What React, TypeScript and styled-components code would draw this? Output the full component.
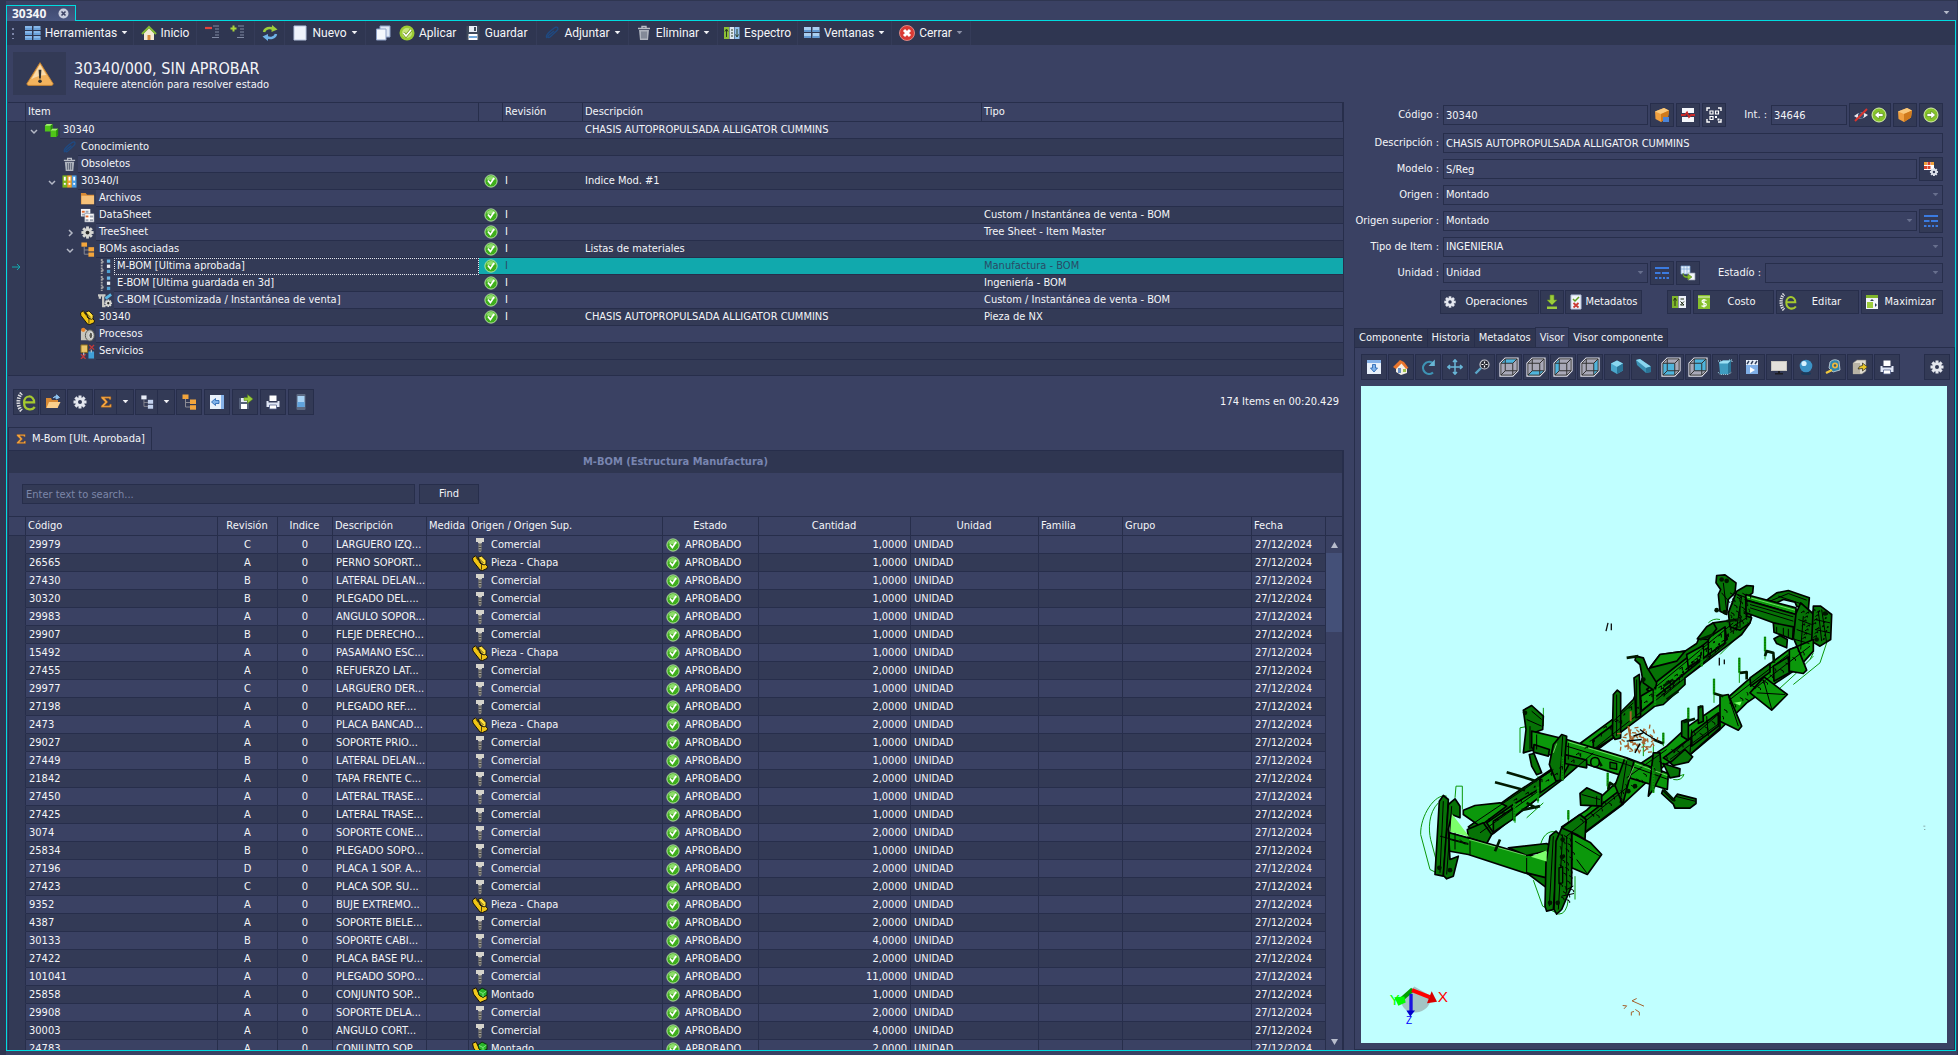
import React, { ReactNode } from "react";
import styled, { createGlobalStyle, css } from "styled-components";

const c = {
  base: "#3a4163",
  alt: "#333a56",
  dark: "#2f3651",
  line: "#272e4b",
  cyan: "#00dce0",
  teal: "#11a9ad",
  text: "#f4f5f8",
};

const ui = `"DejaVu Sans Condensed", "Noto Sans", sans-serif`;
const bar = `Roboto, "Noto Sans", sans-serif`;

const Global = createGlobalStyle`
  *, *::before, *::after { box-sizing: border-box; }
  body { margin: 0; background: ${c.base}; color: ${c.text}; font: 11px/14px ${ui}; }
  button, input, select { font: inherit; color: inherit; margin: 0; }
  svg { display: block; flex: none; }
`;

/* ---------- icons ---------- */

const gear = (fill: string, hole: string) => (
  <>
    {[0, 45, 90, 135].map((a) => (
      <rect key={a} x="6.5" y="1.5" width="3" height="13" fill={fill} transform={`rotate(${a} 8 8)`} />
    ))}
    <circle cx="8" cy="8" r="4.6" fill={fill} />
    <circle cx="8" cy="8" r="2" fill={hole} />
  </>
);

const cube = (face: string) => (
  <>
    <path d="M1 5L5 1H15V11L11 15H1Z" fill="#a9a9b8" stroke="#e4e4ee" strokeWidth="1.4" />
    <path d={face} fill="#4fb4dc" />
    <path d="M1.5 5L5 1.5H14.5V11L11 14.5H1.5ZM1.5 5H11V14.5M11 5L14.5 1.5M5 1.5V11H14.5M5 11L1.5 14.5" fill="none" stroke="#333" strokeWidth=".8" />
  </>
);

const sigma = <path d="M2.5 2H13.5V5H12L11.5 3.8H6.5L10 8L6 12.3H11.8L12.5 10.6H14V14H2.5V12.5L7 8L2.5 3.5Z" fill="#f5a742" stroke="#a85f14" strokeWidth=".5" />;

const paper = <path d="M2 1H14V15H2Z" fill="#eef3fb" stroke="#b7c3dd" />;

const tree = (a: string, b: string) => (
  <>
    <path d="M4.5 5V13H10M4.5 8.5H10" fill="none" stroke="#8c8c94" />
    <rect x="1.5" y="0.5" width="6" height="4.5" fill={a} />
    <rect x="9" y="5.5" width="6" height="4.5" fill={b} />
    <rect x="9" y="11.2" width="6" height="4.5" fill={b} />
  </>
);

const bracket = (
  <>
    <path d="M4.500 1C1 4 1 12 4.500 15" fill="none" stroke="#d9d9dd" strokeWidth="3" strokeDasharray="1.200 .8" />
    <path d="M6.800 8.300H14.500C14.500 2 6.500 2 6.500 8.500C6.500 15 13 14.800 15 12" fill="none" stroke="#a5c92f" strokeWidth="1.800" />
  </>
);

const printer = (
  <>
    <path d="M4.500 1.500H11.500V7H4.500Z" fill="#fff" />
    <path d="M1.500 7H3.500V8.500H12.500V7H14.500V13H1.500Z" fill="#dfe6f5" />
    <path d="M4.500 11H11.500V15H4.500Z" fill="#fff" stroke="#56628c" strokeWidth=".8" />
  </>
);

const trash = (
  <>
    <path d="M2 3.500H14M6 3V1.500H10V3" stroke="#b9bdc6" strokeWidth="1.400" fill="none" />
    <path d="M3 5H13L12 15H4Z" fill="#aeb3bd" />
    <path d="M6 6.500V13.500M8 6.500V13.500M10 6.500V13.500" stroke="#596073" />
  </>
);

const box = (
  <>
    <path d="M1 4.500L10 1L15 3.500L14 10.500L7 15L1.500 12Z" fill="#f0a040" />
    <path d="M1 4.500L7 7L15 3.500L10 1Z" fill="#f9c97c" />
    <path d="M7 7L15 3.500L14 10.500L7 15Z" fill="#cf7a1c" />
  </>
);

const arrowDisc = (d: string) => (
  <>
    <circle cx="8" cy="8" r="7" fill="#86c32a" stroke="#d7efac" />
    <path d={d} fill="#fff" stroke="#4d8011" strokeWidth=".6" />
  </>
);

const part = (
  <>
    <path d="M.5 3L3.500 .8L8 6L8 8L10.500 9.500L13 8.500L15.500 11.500L15 13.500L10.500 15.500L8 15L1 6Z" fill="#f0c414" stroke="#15120a" />
    <path d="M6 2.500L9.500 1L14 5.500L14 9L12 10L9 8Z" fill="#ffdf3c" stroke="#15120a" strokeWidth=".9" />
    <path d="M4 2.500L9.500 9.500V14.500M6.500 3L11.500 8" fill="none" stroke="#15120a" strokeWidth=".7" />
  </>
);

const list = <path d="M1 3H15M1 8H6.500M8 8H15M1 13H3.500M5 13H7.500M9 13H11M12.500 13H15" stroke="#3b7be0" strokeWidth="1.800" />;

const binders = (
  <>
    {["#7cb51c", "#f2a32a", "#4a9be0"].map((f, i) => (
      <g key={f}>
        <rect x={i * 5 + 0.5} y="1.500" width="5" height="13" fill={f} />
        <rect x={i * 5 + 2} y="3" width="2" height="4" fill="#fff" />
        <rect x={i * 5 + 2} y="9.500" width="2" height="2" fill="#fff" />
      </g>
    ))}
  </>
);

const bars = (
  <>
    <path d="M4 0V16M4 3H7M4 12H7" stroke="#a4a4a8" strokeWidth="2" fill="none" strokeDasharray="2 1" />
    <rect x="9.500" y="0.500" width="3.500" height="3.500" fill="#6ab8e8" />
    <rect x="9.500" y="6" width="3.500" height="3.500" fill="#e9edf4" />
    <rect x="9.500" y="11.500" width="3.500" height="3.500" fill="#4d9fd2" />
  </>
);

const house = (
  <>
    <path d="M3 8L8 3L13 8V15H3Z" fill="#f3e9d3" />
    <path d="M6.500 10H9.500V15H6.500Z" fill="#d58a3a" />
    <path d="M1 9L8 2L15 9" fill="none" stroke="#83b935" strokeWidth="2" />
  </>
);

const icons: Record<string, ReactNode> = {
  check: (
    <>
      <circle cx="8" cy="8" r="7" fill="#3fae1c" stroke="#c4efae" strokeWidth="1" />
      <path d="M2.500 6A6 6 0 0 1 13.500 6Q8 8.500 2.500 6Z" fill="#8edc6c" />
      <path d="M4.500 7.500L7.300 11L11.500 4.500" fill="none" stroke="#fff" strokeWidth="2" />
    </>
  ),
  apply: (
    <>
      <circle cx="8" cy="8" r="7.500" fill="#9bcb34" />
      <circle cx="8" cy="8" r="5" fill="#c6e57b" />
      <path d="M4.500 8L7 11L12 5" fill="none" stroke="#6b8f18" strokeWidth="3" />
      <path d="M4.500 8L7 11L12 5" fill="none" stroke="#fff" strokeWidth="1.700" />
    </>
  ),
  tools: (
    <>
      {[1, 6, 11].map((y) => (
        <g key={y}>
          <rect x="0" y={y} width="7" height="4" fill="#86b7ea" />
          <rect x="8.500" y={y} width="7" height="4" fill="#86b7ea" />
          <path d={`M0 ${y + 3}H7M8.500 ${y + 3}H15.500`} stroke="#4c88c8" />
        </g>
      ))}
    </>
  ),
  windows: (
    <>
      {[2, 8].map((y) => (
        <g key={y}>
          <rect x="0" y={y} width="7" height="5" fill="#a9cdf0" />
          <rect x="8.500" y={y} width="7" height="5" fill="#a9cdf0" />
          <path d={`M0 ${y + 4}H7M8.500 ${y + 4}H15.500`} stroke="#4c88c8" strokeWidth="1.500" />
        </g>
      ))}
    </>
  ),
  home: house,
  collapse: <><path d="M0 3H7" stroke="#e0443c" strokeWidth="2.200" /><path d="M8 1H14M10 4H14M10 7H14M10 10H14M7 12.500H14" stroke="#8089a3" /></>,
  expand: <><path d="M.5 3.500H6.500M3.500 .5V6.500" stroke="#a9d43a" strokeWidth="2" /><path d="M8 1H14M10 4H14M10 7H14M10 10H14M7 12.500H14" stroke="#8089a3" /></>,
  refresh: (
    <>
      <path d="M2 7C3 3 8 2 11 4" fill="none" stroke="#9ccc3c" strokeWidth="2.500" />
      <path d="M10 0L15.500 4.500L9.500 7Z" fill="#9ccc3c" />
      <path d="M14 9C13 13 8 14 5 12" fill="none" stroke="#6fb2e8" strokeWidth="2.500" />
      <path d="M6 9L.5 11.500L6 16Z" fill="#6fb2e8" />
    </>
  ),
  page: paper,
  copy: <><path d="M5 1H15V12H5Z" fill="#dfe7f5" stroke="#8fa2c8" /><path d="M1.500 4H11V15H1.500Z" fill="#f5f8fd" stroke="#8fa2c8" /></>,
  save: (
    <>
      <path d="M1.500 1H14.500V15H1.500Z" fill="#3f4a5c" />
      <path d="M4 1H12V7H4Z" fill="#e8eef6" />
      <path d="M9 2H11V6H9Z" fill="#3f4a5c" />
      <path d="M3.500 9H12.500V15H3.500Z" fill="#fff" />
      <path d="M4 12H12" stroke="#6fa8dc" strokeWidth="2" />
    </>
  ),
  clip: <path d="M3 13C0 10 9 4 11 2.500C14 1 15 4 12.500 6L6 12C4 13.500 3 11.500 5 10L10 6" fill="none" stroke="#1f4a82" strokeWidth="1.400" />,
  trash,
  spectrum: (
    <>
      <path d="M0 2H5V14H0Z" fill="#8cbf36" /><path d="M5.500 2H10V14H5.500Z" fill="#dbe6ef" /><path d="M10.500 2H15.500V14H10.500Z" fill="#8fc0ec" />
      <path d="M2.500 12V5M1 6.500L2.500 4L4 6.500M7 5H9M7 8H9M7 11H9M13 4V11M11.500 9.500L13 12L14.500 9.500" stroke="#2a3c22" fill="none" />
    </>
  ),
  close: <><circle cx="8" cy="8" r="7.500" fill="#d93a34" stroke="#f09a94" strokeWidth=".8" /><path d="M5 5L11 11M11 5L5 11" stroke="#fff" strokeWidth="3" /></>,
  cubes: (
    <>
      <path d="M1 3L3 1H9V7L7 9H1Z" fill="#4fc418" /><path d="M1 3L3 1H9L7 3Z" fill="#a5ee74" /><path d="M7 3L9 1V7L7 9Z" fill="#2a8c0c" />
      <path d="M7 8L9 6H15V13L13 15H7Z" fill="#4fc418" /><path d="M7 8L9 6H15L13 8Z" fill="#a5ee74" /><path d="M13 8L15 6V13L13 15Z" fill="#2a8c0c" />
    </>
  ),
  binders,
  folder: <><path d="M1 2H6L7.500 4H15V14H1Z" fill="#d88a34" /><path d="M1.500 5H15V14H1.500Z" fill="#f7c27a" /></>,
  sheet: (
    <>
      <path d="M1 1H11V9H1Z" fill="#f3f4f7" /><path d="M2 3H5V5H2Z" fill="#e0662a" /><path d="M6 3H9V5H6ZM2 6H5V8H2Z" fill="#9aa1b0" />
      <path d="M5 6H15V15H5Z" fill="#fff" stroke="#6b7288" strokeWidth=".6" /><path d="M6 8H9V10H6Z" fill="#e0662a" /><path d="M10.500 8H14V10H10.500ZM6 12H9V14H6ZM10.500 12H14V14H10.500Z" fill="#9aa1b0" />
    </>
  ),
  gear: gear("#e4e7ee", c.alt),
  treeGear: gear("#d7d7d3", "#2a2a2a"),
  tree: tree("#f3a53c", "#f3a53c"),
  treeWhite: tree("#e8edf7", "#c3d2ee"),
  bars,
  cbom: <><path d="M0 2.500H8M2 2V6M5.500 3V14H8" stroke="#c9c9c4" strokeWidth="2.400" fill="none" /><path d="M8 6L14 1.500" stroke="#58b4e2" strokeWidth="3" /><g transform="translate(6 6) scale(.62)">{gear("#d7d7d3", "#222")}</g></>,
  part,
  asm: <><path d="M.5 2.500L4 .8L8 9L15 8.500V12.500L8 15.500L1.500 7Z" fill="#f2c91c" stroke="#15120a" /><path d="M6 4L10 1L15 3.500V8L11 10.500L7 8Z" fill="#28b428" stroke="#0b2a0b" /><path d="M7 4.500L11 6.500V10M11 6.500L14.500 4" stroke="#8ef08e" strokeWidth=".8" fill="none" /></>,
  process: <><path d="M1 4Q5 0 8 4V14H1Z" fill="#c9c6bd" /><circle cx="3.500" cy="3" r="2.300" fill="#e8852e" /><ellipse cx="10.500" cy="9" rx="4.800" ry="6" fill="#c4c4c0" stroke="#55554f" /><ellipse cx="11.500" cy="9" rx="2" ry="3.500" fill="#55554f" stroke="#eee" /></>,
  service: <><path d="M1 1H8V9H1Z" fill="#e8c56a" stroke="#8a6d1f" /><path d="M9 8H15V15.500H9Z" fill="#3f9fd8" /><path d="M10 1L15 6M15 1L10 6M1 11L6 16M6 11L1 16" stroke="#c23a3a" strokeWidth="1.400" /><path d="M12 6V9M4 9V12" stroke="#ddd" /></>,
  screw: <><path d="M4 1H12V5H10V6H6V5H4Z" fill="#d5d3cb" /><path d="M6.500 6H9.500V14L8 15.500L6.500 14Z" fill="#9a9890" /><path d="M6.500 8H9.500M6.500 10.500H9.500M6.500 13H9.500" stroke="#44443f" strokeWidth="1.200" /></>,
  warn: (
    <>
      <path d="M8 1.500L15.500 13.500Q15.500 14.500 14.500 14.500H1.500Q.5 14.500 .5 13.500Z" fill="#f3b35d" stroke="#c9852f" strokeWidth=".5" />
      <path d="M8 2.500L11.500 8.500Q6 9 3 11Z" fill="#fbdcaa" />
      <path d="M7.200 5.500H8.800L8.500 10.500H7.500Z" fill="#333" /><circle cx="8" cy="12.200" r="1" fill="#333" />
    </>
  ),
  bracket,
  open: <><path d="M1 4H6L7 6H13V14H1Z" fill="#d88a34" /><path d="M4 8H15.500L12.500 14H1.500Z" fill="#fbd08c" /><path d="M8 4Q10 1 13 3M11.500 .8L14.500 3.500L11 5Z" stroke="#8fc4f0" fill="#8fc4f0" /></>,
  sigma,
  dock: <><path d="M1 1H15V15H1Z" fill="#e9f1fb" /><path d="M12 1H15V15H12Z" fill="#86b2e8" /><path d="M10 6.500V9.500H6.500V11.500L2.500 8L6.500 4.500V6.500Z" fill="#7fb2ea" stroke="#1f5fae" strokeWidth=".8" /></>,
  dockDown: <><path d="M1 1H15V15H1Z" fill="#e9f1fb" /><path d="M1 1H15V4H1Z" fill="#86b2e8" /><path d="M6.500 5.500H9.500V9H11.500L8 13L4.500 9H6.500Z" fill="#7fb2ea" stroke="#1f5fae" strokeWidth=".8" /></>,
  export: <><path d="M2 4H12V15H2Z" fill="#55607a" /><path d="M4 4H10V8H4Z" fill="#e8eef6" /><path d="M4 10H10V15H4Z" fill="#fff" /><path d="M7 3.500H10.500V.5L16 5L10.500 9.500V6.500H7Z" fill="#9ccc3c" stroke="#4d7a14" strokeWidth=".5" /></>,
  print: printer,
  phone: <><rect x="3.500" y="0" width="9" height="16" rx="1" fill="#5d6a82" /><path d="M4.500 2H11.500V13H4.500Z" fill="#a8d3f5" /><path d="M4.500 8H11.500V13H4.500Z" fill="#5fa3dd" /></>,
  boxSave: <>{box}<path d="M9 10H15V15H9Z" fill="#4a84d8" /></>,
  box,
  pulse: <><path d="M2 1H14V6H2ZM2 10H14V15H2Z" fill="#f4f6fa" /><path d="M1 8H5L7 5.500L9 10L11 8H15" fill="none" stroke="#c62828" strokeWidth="1.800" /></>,
  qr: (
    <>
      <path d="M1 4V1H4M12 1H15V4M15 12V15H12M4 15H1V12" fill="none" stroke="#fff" strokeWidth="1.400" />
      <path d="M4 4H7V7H4ZM9.500 4H12.500V7H9.500ZM4 9.500H7V12.500H4Z" fill="none" stroke="#fff" strokeWidth="1.200" />
      <path d="M9 9H11V11H9ZM11.500 11.500H13.500V13.500H11.500Z" fill="#fff" />
    </>
  ),
  eyeOff: <><path d="M1 9Q8 2.500 15 8Q8 14.500 1 9Z" fill="#e6e8ee" /><circle cx="8" cy="8.500" r="3" fill="#3a4a6a" /><path d="M2 14L14 2" stroke="#d9342e" strokeWidth="2" /></>,
  prev: arrowDisc("M12 6.500V9.500H8V12L3.500 8L8 4V6.500Z"),
  next: arrowDisc("M4 6.500V9.500H8V12L12.500 8L8 4V6.500Z"),
  gridGear: <><path d="M1 1H11V9H1Z" fill="#fff" /><path d="M1 1H4V4H1ZM8 1H11V4H8Z" fill="#f0a23a" /><path d="M4.500 1H7.500V4H4.500ZM1 5H4V8H1ZM4.500 5H7.500V8H4.500Z" fill="#d9442c" /><g transform="translate(6 6) scale(.62)">{gear("#dfe3ec", c.alt)}</g></>,
  list,
  convert: <><path d="M1 1H10V9H1Z" fill="#e8f1fb" stroke="#7aa4d4" strokeWidth=".7" /><path d="M1 4H10M4 1V9M7 1V9" stroke="#7aa4d4" strokeWidth=".7" /><path d="M8 8H15V15H8Z" fill="#f4f7fb" stroke="#8d98ab" strokeWidth=".7" /><path d="M3 8Q4 12 8 11V9L12 12L8 15V13Q2 13 3 8Z" fill="#86bf2c" stroke="#4d7a14" strokeWidth=".5" /></>,
  download: <><path d="M6 1H10V6H13L8 11L3 6H6Z" fill="#9ccc3c" stroke="#5f8d1c" strokeWidth=".6" /><path d="M3 12.500H13V15H3Z" fill="#9ccc3c" /></>,
  meta: <><path d="M3 1H13V15H3Z" fill="#f1f4fa" stroke="#b7c3dd" /><path d="M5 5L7 7L11 3" fill="none" stroke="#5f9e20" strokeWidth="1.500" /><path d="M5.500 9L10.500 13.500M10.500 9L5.500 13.500" stroke="#c93a34" strokeWidth="1.800" /></>,
  mean: <><path d="M1 2H7V14H1Z" fill="#7fb52c" /><path d="M7.500 2H15V14H7.500Z" fill="#eef2f8" /><path d="M4 12V5M2.500 6.500L4 4L5.500 6.500M9.500 5H13M9.500 11L13 7.500M9.500 7.500L13 11M9.500 11H13" stroke="#1f2c14" fill="none" /></>,
  money: <><path d="M2 1H14V15H2Z" fill="#86bf2c" /><path d="M2 3H14" stroke="#e8f5cf" /><path d="M10.500 6.500Q8 5 6.300 6.500Q5.500 8.500 8 9Q11 9.600 10 11.500Q8 13 5.500 11.800M8 5V13.500" fill="none" stroke="#fff" strokeWidth="1.200" /></>,
  maximize: <><path d="M2 1H14V15H2Z" fill="#f1f4fa" /><path d="M2 1H14V4H2Z" fill="#7fb52c" /><path d="M3 8H9V14H3Z" fill="#9ccc3c" /><path d="M6 7L8 5L10 7ZM11 9L13 11L11 13Z" fill="#2c3a55" /></>,
  redHome: <><path d="M3 8L8 3L14 8V14L8 16L3 13Z" fill="#f4efe4" /><path d="M0 8L7 1L11 3L15.500 9L13 10L8.500 4.500L3 10Z" fill="#e8742c" /><path d="M5 9H8V14H5Z" fill="#6a8fc4" /><path d="M10 10H13V13H10Z" fill="#9ec24a" /></>,
  rotate: <><path d="M13 13.500A6 6 0 1 1 12.500 4" fill="none" stroke="#3e93b4" strokeWidth="2.200" /><path d="M14.800 .5V7H8.500Z" fill="#68b6d4" /></>,
  move: <path d="M8 1V15M1 8H15M6 3L8 .8L10 3M6 13L8 15.200L10 13M3 6L.8 8L3 10M13 6L15.200 8L13 10" stroke="#69b7d8" fill="none" strokeWidth="1.500" />,
  zoom: <><circle cx="10.500" cy="5.500" r="4.500" fill="#262a33" stroke="#c9ccd2" strokeWidth="1.200" /><path d="M10.500 2.500V8.500M7.500 5.500H13.500" stroke="#fff" strokeWidth="1.200" strokeDasharray="2 2" /><path d="M7 9L1.500 14.500" stroke="#5aa6c8" strokeWidth="2.400" /></>,
  cTop: cube("M1.500 5L5 1.500H14.500L11 5Z"),
  cBottom: cube("M1.500 14.500L5 11H14.500L11 14.500Z"),
  cLeft: cube("M1.500 5L5 1.500V11L1.500 14.500Z"),
  cRight: cube("M11 5L14.500 1.500V11L11 14.500Z"),
  cFront: cube("M1.500 5H11V14.500H1.500Z"),
  cBack: cube("M5 1.500H14.500V11H5Z"),
  iso: <><path d="M2 4.500L8 1.500L14 4.500V11.500L8 15L2 11.500Z" fill="#4aa6cb" /><path d="M2 4.500L8 1.500L14 4.500L8 8Z" fill="#8ad6ef" /><path d="M8 8V15L14 11.500V4.500Z" fill="#2a7497" /></>,
  persp: <><path d="M0 1L4 0L15 8V13L10 14L1 6Z" fill="#3a8fb2" /><path d="M0 1L4 0L15 7.500L10 9Z" fill="#8ad6ef" /><path d="M10 9L15 7.500V13L10 14Z" fill="#2a7497" /></>,
  fit: <><path d="M2 3.500L6 1.500H14V12L11 15H3Z" fill="#3f9cc0" /><path d="M2 3.500L6 1.500H14L11 4.500H2.500Z" fill="#9be0f4" /><path d="M11 4.500L14 1.500V12L11 15Z" fill="#2a7497" /><path d="M1 2H4M12 1H15V4M1 13L3 15.500H11L15 13" fill="none" stroke="#a8e2f2" strokeDasharray="1 1" /></>,
  clapper: <><path d="M2 1H14V15H2Z" fill="#7faee6" /><path d="M2 1H14V6H2Z" fill="#e9f0fa" /><path d="M3 5L5 2M7 5L9 2M11 5L13 2" stroke="#33415e" strokeWidth="1.500" /><path d="M6 8L11 11L6 14Z" fill="#fff" /></>,
  monitor: <><path d="M0 2H16V12H0Z" fill="#c9c6c0" /><path d="M1 3H15V11H1Z" fill="#e4e1dc" /><path d="M7 12H9V14H12V15.500H4V14H7Z" fill="#1c1c22" /></>,
  sphere: <><ellipse cx="8" cy="14.500" rx="5" ry="1.500" fill="#1a3a5a" /><circle cx="8" cy="7" r="6.300" fill="#3c93c6" /><circle cx="6" cy="4.500" r="2.600" fill="#d8f2ff" /></>,
  tape: <><path d="M5 3Q9 -1 14 2L15 11L8 13L4 9Z" fill="#2f86ac" stroke="#cfd9df" strokeWidth=".8" /><circle cx="10" cy="6.500" r="3" fill="#f0b83c" /><circle cx="10" cy="6.500" r="1.300" fill="#2b5f78" /><path d="M1 14L7 11" stroke="#f0c83c" strokeWidth="2.400" /></>,
  cut: <><path d="M1 4L5 1H14V12L10 15H1Z" fill="#e0dcd0" stroke="#777" strokeWidth=".6" /><path d="M1 4H8V15H1Z" fill="#b9b4a6" /><path d="M6 10Q7 6.500 10.500 6.500V4L15.500 8L10.500 12V9.500Z" fill="#e8c628" stroke="#222" strokeWidth=".7" /></>,
};

const Icon = ({ name, size = 16 }: { name: string; size?: number }) => (
  <svg width={size} height={size} viewBox="0 0 16 16" aria-hidden="true">
    {icons[name]}
  </svg>
);

const Caret = ({ color = "#f4f5f8" }: { color?: string }) => (
  <svg width="7" height="4" viewBox="0 0 7 4" aria-hidden="true">
    <path d="M1 0H6L3.500 3Z" fill={color} stroke={color} strokeWidth=".5" />
  </svg>
);

/* ---------- frame ---------- */

const Shell = styled.div`
  display: flex;
  flex-direction: column;
  height: 100vh;
  padding: 4px 2px 4px 6px;
  background: ${c.base};
  border-top: 1px solid ${c.dark};
  box-shadow: inset 6px 0 0 ${c.dark}, inset -1px 0 0 ${c.dark};
`;

const DocTabs = styled.div`
  display: flex;
  justify-content: space-between;
  align-items: center;
  padding-right: 6px;
  margin-bottom: -1px;
`;

const DocTab = styled.div`
  position: relative;
  z-index: 1;
  display: flex;
  align-items: center;
  gap: 12px;
  height: 16px;
  padding: 0 6px 0 5px;
  border: 1px solid ${c.cyan};
  border-bottom: 0;
  background: linear-gradient(#3f4a70, #4a5781);
  font: bold 12px/14px "Open Sans", sans-serif;
`;

const CloseTab = styled.button`
  display: flex;
  padding: 0;
  border: 0;
  background: none;
`;

const Frame = styled.main`
  display: flex;
  flex-direction: column;
  flex: 1;
  min-height: 0;
  border: 1px solid ${c.cyan};
  background: ${c.base};
`;

const Toolbar = styled.div`
  display: flex;
  flex: none;
  height: 24px;
  background: ${c.dark};
`;

const Grip = styled.div`
  width: 3px;
  height: 12px;
  margin: 6px 5px;
  background: repeating-linear-gradient(transparent 0 1px, #7d86a8 1px 3px, transparent 3px 5px);
  background-size: 2px 100%;
  background-repeat: no-repeat;
`;

const ToolGroup = styled.div<{ $w: number }>`
  display: flex;
  align-items: center;
  justify-content: space-evenly;
  width: ${(p) => p.$w}px;
  border-right: 1px solid #353c59;
`;

const ToolButton = styled.button`
  display: flex;
  align-items: center;
  gap: 4px;
  padding: 0;
  border: 0;
  background: none;
  font: 12px/16px ${bar};
  white-space: nowrap;
`;

const Body = styled.div`
  display: grid;
  grid-template-columns: minmax(0, 1fr) 601px;
  flex: 1;
  min-height: 0;
`;

const Left = styled.section`
  display: flex;
  flex-direction: column;
  min-height: 0;
  padding: 0 10px 0 1px;
`;

const Notice = styled.header`
  display: flex;
  flex: none;
  align-items: center;
  gap: 8px;
  height: 57px;
  padding-left: 5px;
`;

const NoticeIcon = styled.div`
  display: grid;
  place-items: center;
  width: 53px;
  height: 43px;
  background: ${c.alt};
`;

const NoticeText = styled.div`
  padding-top: 4px;
`;

const Title = styled.h1`
  margin: 0;
  font: 16px/18px ${ui};
`;

const Subtitle = styled.p`
  margin: 0;
`;

/* ---------- tables ---------- */

const Table = styled.table`
  width: 100%;
  table-layout: fixed;
  border-spacing: 0;
  border-top: 1px solid ${c.line};
`;

const Th = styled.th<{ $align?: string }>`
  height: 19px;
  padding: 0 3px 0 2px;
  border-right: 1px solid ${c.line};
  border-bottom: 1px solid ${c.line};
  background: ${c.base};
  font-weight: normal;
  line-height: 14px;
  text-align: ${(p) => p.$align ?? "left"};
  white-space: nowrap;
`;

const TreeBox = styled.div`
  flex: none;
  padding-bottom: 15px;
  background: ${c.alt};
  border-right: 1px solid ${c.line};
  border-bottom: 1px solid ${c.line};
`;

const TreeTd = styled.td<{ $bg: string; $sel?: boolean }>`
  height: 17px;
  padding: 0 2px;
  border-bottom: 1px solid ${c.line};
  background: ${(p) => p.$bg};
  color: ${(p) => (p.$sel ? "#2a4a66" : c.text)};
  line-height: 14px;
  white-space: nowrap;
`;

const Gutter = styled.td`
  padding: 0;
  border-right: 1px solid ${c.line};
  color: ${c.teal};
  line-height: 14px;
  text-align: center;
`;

const NodeTd = styled.td`
  height: 17px;
  padding: 0;
`;

const Node = styled.div<{ $level: number }>`
  display: flex;
  height: 17px;
  padding-left: ${(p) => p.$level * 18}px;
`;

const Expander = styled.button`
  display: grid;
  place-items: center;
  width: 16px;
  padding: 0;
  border: 0;
  background: none;
`;

const NodeIcon = styled.span`
  display: grid;
  place-items: center;
  width: 18px;
`;

const NodeLabel = styled.span<{ $bg: string; $sel?: boolean }>`
  flex: 1;
  padding: 1px 3px 0;
  line-height: 14px;
  white-space: nowrap;
  background: ${(p) => p.$bg};
  border-bottom: 1px solid ${c.line};
  ${(p) =>
    p.$sel &&
    css`
      padding: 0 2px;
      border: 1px dotted #e6e8ee;
    `}
`;

const StatusCell = styled.div`
  display: flex;
  justify-content: center;
`;

type TreeRow = [number, string, string, boolean, string, string, string?];
const treeRows: TreeRow[] = [
  [0, "cubes", "30340", false, "CHASIS AUTOPROPULSADA ALLIGATOR CUMMINS", "", "open"],
  [1, "clip", "Conocimiento", false, "", ""],
  [1, "trash", "Obsoletos", false, "", ""],
  [1, "binders", "30340/I", true, "Indice Mod. #1", "", "open"],
  [2, "folder", "Archivos", false, "", ""],
  [2, "sheet", "DataSheet", true, "", "Custom / Instantánea de venta - BOM"],
  [2, "treeGear", "TreeSheet", true, "", "Tree Sheet - Item Master", "closed"],
  [2, "tree", "BOMs asociadas", true, "Listas de materiales", "", "open"],
  [3, "bars", "M-BOM [Ultima aprobada]", true, "", "Manufactura - BOM"],
  [3, "bars", "E-BOM [Ultima guardada en 3d]", true, "", "Ingeniería - BOM"],
  [3, "cbom", "C-BOM [Customizada / Instantánea de venta]", true, "", "Custom / Instantánea de venta - BOM"],
  [2, "part", "30340", true, "CHASIS AUTOPROPULSADA ALLIGATOR CUMMINS", "Pieza de NX"],
  [2, "process", "Procesos", false, "", ""],
  [2, "service", "Servicios", false, "", ""],
];
const selectedRow = 8;

const ItemTree = () => (
  <TreeBox>
    <Table>
      <colgroup>
        <col width="18" />
        <col width="453" />
        <col width="24" />
        <col width="80" />
        <col width="399" />
        <col />
      </colgroup>
      <thead>
        <tr>
          <Th />
          <Th>Item</Th>
          <Th />
          <Th>Revisión</Th>
          <Th>Descripción</Th>
          <Th>Tipo</Th>
        </tr>
      </thead>
      <tbody>
        {treeRows.map(([level, icon, label, ok, desc, tipo, state], i) => {
          const sel = i === selectedRow;
          const stripe = i % 2 ? c.alt : c.base;
          const bg = sel ? c.teal : stripe;
          return (
            <tr key={i}>
              <Gutter>
                {sel && (
                  <svg width="17" height="10" viewBox="0 0 17 10" aria-hidden="true">
                    <path d="M4 5H12M9 2L12 5L9 8" fill="none" stroke={c.teal} />
                  </svg>
                )}
              </Gutter>
              <NodeTd>
                <Node $level={level}>
                  <Expander aria-label={label} disabled={!state}>
                    {state && (
                      <svg width="8" height="8" viewBox="0 0 8 8" aria-hidden="true">
                        <path d={state === "open" ? "M1 3L4 6L7 3" : "M3 1L6 4L3 7"} fill="none" stroke="#b4b8c6" strokeWidth="1.500" />
                      </svg>
                    )}
                  </Expander>
                  <NodeIcon>
                    <Icon name={icon} size={15} />
                  </NodeIcon>
                  <NodeLabel $bg={sel ? c.alt : stripe} $sel={sel}>
                    {label}
                  </NodeLabel>
                </Node>
              </NodeTd>
              <TreeTd $bg={bg}>
                <StatusCell>{ok && <Icon name="check" size={14} />}</StatusCell>
              </TreeTd>
              <TreeTd $bg={bg} $sel={sel}>{ok && "I"}</TreeTd>
              <TreeTd $bg={bg} $sel={sel}>{desc}</TreeTd>
              <TreeTd $bg={bg} $sel={sel}>{tipo}</TreeTd>
            </tr>
          );
        })}
      </tbody>
    </Table>
  </TreeBox>
);

/* ---------- buttons ---------- */

const IconButton = styled.button<{ $w?: number; $h?: number }>`
  display: grid;
  place-items: center;
  flex: none;
  width: ${(p) => p.$w ?? 24}px;
  height: ${(p) => p.$h ?? 24}px;
  padding: 0;
  border: 1px solid ${c.line};
  background: ${c.alt};
`;

const Actions = styled.div`
  display: flex;
  flex: none;
  justify-content: space-between;
  align-items: center;
  height: 51px;
  padding: 0 5px;
`;

const ButtonRun = styled.div<{ $gap?: number }>`
  display: flex;
  gap: ${(p) => p.$gap ?? 1}px;
`;

const Split = styled.div`
  display: flex;
  & > * + * {
    border-left: 0;
  }
`;

const BomTab = styled.div`
  display: flex;
  flex: none;
  align-items: center;
  align-self: flex-start;
  gap: 5px;
  height: 23px;
  padding: 0 6px;
  border: 1px solid ${c.line};
  border-bottom: 0;
`;

const BomPanel = styled.section`
  display: flex;
  flex-direction: column;
  flex: 1;
  min-height: 0;
  border: 1px solid ${c.line};
  border-right-width: 2px;
  border-bottom: 0;
`;

const BomTitle = styled.h2`
  flex: none;
  margin: 0;
  background: ${c.dark};
  color: #7885b0;
  font: bold 11px/22px ${ui};
  text-align: center;
`;

const Search = styled.form`
  display: flex;
  flex: none;
  gap: 4px;
  padding: 11px 13px 12px;
`;

const SearchInput = styled.input`
  width: 393px;
  height: 20px;
  padding: 0 3px;
  border: 1px solid ${c.line};
  background: ${c.alt};
  &::placeholder {
    color: #7c86a8;
  }
`;

const FindButton = styled.button`
  width: 60px;
  height: 20px;
  padding: 0;
  border: 1px solid ${c.line};
  background: ${c.alt};
`;

const GridWrap = styled.div`
  display: flex;
  flex: 1;
  min-height: 0;
  overflow: hidden;
`;

const GridClip = styled.div`
  flex: 1;
  min-width: 0;
  overflow: hidden;
`;

const Td = styled.td<{ $align?: string }>`
  height: 18px;
  padding: 0 3px;
  overflow: hidden;
  border-right: 1px solid ${c.line};
  border-bottom: 1px solid ${c.line};
  line-height: 14px;
  text-align: ${(p) => p.$align ?? "left"};
  white-space: nowrap;
`;

const GridRow = styled.tr`
  background: ${c.base};
  &:nth-child(even) {
    background: ${c.alt};
  }
  & > td:first-child {
    background: ${c.alt};
    border-bottom-color: ${c.alt};
  }
`;

const IconText = styled.div<{ $gap: number }>`
  display: flex;
  align-items: center;
  gap: ${(p) => p.$gap}px;
  height: 16px;
`;

const Scroll = styled.div`
  display: flex;
  flex-direction: column;
  align-items: center;
  width: 16px;
  border-top: 1px solid ${c.line};
`;

const ScrollHead = styled.div`
  width: 100%;
  height: 19px;
  border-bottom: 1px solid ${c.line};
`;

const ScrollArrow = styled.button`
  display: grid;
  place-items: center;
  width: 16px;
  height: 17px;
  padding: 0;
  border: 0;
  background: none;
`;

const Thumb = styled.div`
  width: 100%;
  height: 79px;
  margin-bottom: auto;
  background: #445078;
`;

const C = "Comercial";
const P = "Pieza - Chapa";
const M = "Montado";
const bom: [string, string, string, string, string][] = [
  ["29979", "C", "LARGUERO IZQ...", C, "1,0000"],
  ["26565", "A", "PERNO SOPORT...", P, "1,0000"],
  ["27430", "B", "LATERAL DELAN...", C, "1,0000"],
  ["30320", "B", "PLEGADO DEL....", C, "1,0000"],
  ["29983", "A", "ANGULO SOPOR...", C, "1,0000"],
  ["29907", "B", "FLEJE DERECHO...", C, "1,0000"],
  ["15492", "A", "PASAMANO ESC...", P, "1,0000"],
  ["27455", "A", "REFUERZO LAT...", C, "2,0000"],
  ["29977", "C", "LARGUERO DER...", C, "1,0000"],
  ["27198", "A", "PLEGADO REF....", C, "2,0000"],
  ["2473", "A", "PLACA BANCAD...", P, "2,0000"],
  ["29027", "A", "SOPORTE PRIO...", C, "1,0000"],
  ["27449", "B", "LATERAL DELAN...", C, "1,0000"],
  ["21842", "A", "TAPA FRENTE C...", C, "2,0000"],
  ["27450", "A", "LATERAL TRASE...", C, "1,0000"],
  ["27425", "A", "LATERAL TRASE...", C, "1,0000"],
  ["3074", "A", "SOPORTE CONE...", C, "2,0000"],
  ["25834", "B", "PLEGADO SOPO...", C, "1,0000"],
  ["27196", "D", "PLACA 1 SOP. A...", C, "2,0000"],
  ["27423", "C", "PLACA SOP. SU...", C, "2,0000"],
  ["9352", "A", "BUJE EXTREMO...", P, "2,0000"],
  ["4387", "A", "SOPORTE BIELE...", C, "2,0000"],
  ["30133", "B", "SOPORTE CABI...", C, "4,0000"],
  ["27422", "A", "PLACA BASE PU...", C, "2,0000"],
  ["101041", "A", "PLEGADO SOPO...", C, "11,0000"],
  ["25858", "A", "CONJUNTO SOP...", M, "1,0000"],
  ["29908", "A", "SOPORTE DELA...", C, "2,0000"],
  ["30003", "A", "ANGULO CORT...", C, "4,0000"],
  ["24783", "A", "CONJUNTO SOP...", M, "2,0000"],
];
const originIcon: Record<string, string> = { [C]: "screw", [P]: "part", [M]: "asm" };
const gridCols = [17, 192, 60, 55, 94, 42, 194, 96, 152, 128, 84];

const BomGrid = () => (
  <GridWrap>
    <GridClip>
      <Table>
        <colgroup>
          {gridCols.map((w, i) => (
            <col key={i} width={w} />
          ))}
          <col />
          <col width="74" />
        </colgroup>
        <thead>
          <tr>
            <Th />
            <Th>Código</Th>
            <Th $align="center">Revisión</Th>
            <Th $align="center">Indice</Th>
            <Th>Descripción</Th>
            <Th>Medida</Th>
            <Th>Origen / Origen Sup.</Th>
            <Th $align="center">Estado</Th>
            <Th $align="center">Cantidad</Th>
            <Th $align="center">Unidad</Th>
            <Th>Familia</Th>
            <Th>Grupo</Th>
            <Th>Fecha</Th>
          </tr>
        </thead>
        <tbody>
          {bom.map(([code, rev, desc, origin, qty]) => (
            <GridRow key={code}>
              <Td />
              <Td>{code}</Td>
              <Td $align="center">{rev}</Td>
              <Td $align="center">0</Td>
              <Td>{desc}</Td>
              <Td />
              <Td>
                <IconText $gap={3}>
                  <Icon name={originIcon[origin]} />
                  {origin}
                </IconText>
              </Td>
              <Td>
                <IconText $gap={5}>
                  <Icon name="check" size={14} />
                  APROBADO
                </IconText>
              </Td>
              <Td $align="right">{qty}</Td>
              <Td>UNIDAD</Td>
              <Td />
              <Td />
              <Td>27/12/2024</Td>
            </GridRow>
          ))}
        </tbody>
      </Table>
    </GridClip>
    <Scroll>
      <ScrollHead />
      <ScrollArrow aria-label="Subir">
        <svg width="7" height="6" viewBox="0 0 7 6" aria-hidden="true">
          <path d="M0 6H7L3.500 0Z" fill="#b8bdcc" />
        </svg>
      </ScrollArrow>
      <Thumb />
      <ScrollArrow aria-label="Bajar">
        <svg width="7" height="6" viewBox="0 0 7 6" aria-hidden="true">
          <path d="M0 0H7L3.500 6Z" fill="#b8bdcc" />
        </svg>
      </ScrollArrow>
    </Scroll>
  </GridWrap>
);

/* ---------- properties form ---------- */

const Right = styled.section`
  display: flex;
  flex-direction: column;
  min-height: 0;
`;

const Form = styled.form`
  display: flex;
  flex-direction: column;
  padding: 57px 12px 0 0;
`;

const Row = styled.div<{ $after?: number }>`
  display: flex;
  align-items: center;
  gap: 2px;
  height: 26px;
  margin-bottom: ${(p) => p.$after ?? 0}px;
`;

const Label = styled.label<{ $w?: number }>`
  flex: none;
  width: ${(p) => p.$w ?? 87}px;
  padding-right: 2px;
  text-align: right;
  white-space: nowrap;
`;

const Input = styled.input<{ $w?: number }>`
  flex: ${(p) => (p.$w ? "none" : "1")};
  width: ${(p) => (p.$w ? `${p.$w}px` : "0")};
  height: 20px;
  padding: 0 2px;
  border: 1px solid ${c.line};
  background: transparent;
`;

const SelectBox = styled.span<{ $w?: number }>`
  display: grid;
  flex: ${(p) => (p.$w ? "none" : "1")};
  width: ${(p) => (p.$w ? `${p.$w}px` : "auto")};
  align-items: center;
  & > * {
    grid-area: 1 / 1;
  }
  & > svg {
    justify-self: end;
    margin-right: 4px;
    pointer-events: none;
  }
`;

const SelectEl = styled.select`
  width: 100%;
  height: 20px;
  padding: 0 2px;
  border: 1px solid ${c.line};
  border-radius: 0;
  background: transparent;
  appearance: none;
`;

const Select = ({ id, value, w }: { id: string; value: string; w?: number }) => (
  <SelectBox $w={w}>
    <SelectEl id={id} defaultValue={value}>
      <option>{value}</option>
    </SelectEl>
    <Caret color="#68708f" />
  </SelectBox>
);

const Commands = styled.div`
  display: flex;
  justify-content: space-between;
  height: 24px;
  margin: 4px 0 0 86px;
`;

const Command = styled.button<{ $w: number }>`
  display: flex;
  align-items: center;
  width: ${(p) => p.$w}px;
  height: 24px;
  padding: 0 2px;
  border: 1px solid ${c.line};
  background: ${c.alt};
  & > span {
    flex: 1;
    text-align: center;
  }
`;

const PairButton = styled(IconButton)`
  display: flex;
  justify-content: space-evenly;
`;

const Tabs = styled.div`
  display: flex;
  flex: none;
  align-items: flex-end;
  height: 21px;
  margin: 13px 0 -1px;
`;

const Tab = styled.button<{ $on?: boolean }>`
  height: ${(p) => (p.$on ? 21 : 20)}px;
  margin-right: -1px;
  padding: 0 4px;
  border: 1px solid ${c.line};
  border-bottom-color: ${(p) => (p.$on ? c.base : c.line)};
  background: ${(p) => (p.$on ? c.base : c.dark)};
  white-space: nowrap;
`;

const Viewer = styled.div`
  display: flex;
  flex-direction: column;
  flex: 1;
  gap: 6px;
  min-height: 0;
  padding: 6px 4px 6px 6px;
  border: 1px solid ${c.line};
`;

const ViewerBar = styled.div`
  display: flex;
  justify-content: space-between;
`;

const Canvas = styled.div`
  flex: 1;
  min-height: 0;
  margin-right: 3px;
  background: #c0ffff;
  & > svg {
    width: 100%;
    height: 100%;
  }
`;

const viewTools = [
  "dockDown", "redHome", "rotate", "move", "zoom", "cTop", "cBottom", "cLeft", "cRight", "iso",
  "persp", "cFront", "cBack", "fit", "clapper", "monitor", "sphere", "tape", "cut", "print",
];
const largeTools = ["cTop", "cBottom", "cLeft", "cRight", "cFront", "cBack"];

/* Chassis shapes: [outline, fill] */
const G = "#0b980b";
const D = "#067306";
const solids: [string, string][] = [
  // far rail
  ["M265 862L400 765L520 685L700 540L760 480L790 410L840 345L915 335L950 312L960 290L1000 250L1070 240L1115 215L1110 250L1085 285L1040 320L915 415L915 435L850 495L825 500L780 535L640 640L545 722L475 775L340 882L300 905Z", D],
  ["M600 612L700 538L705 580L630 630Z", G],
  ["M640 600L700 555L705 592L640 632Z", D],
  ["M800 450L1035 265L1040 300L830 470Z", G],
  ["M985 295L1035 262V310L985 345Z", G],
  ["M920 345L970 318V352L925 385Z", G],
  ["M782 470L820 448V485L784 515Z", G],
  ["M480 715L580 650L545 715L480 760Z", G],
  ["M320 850L400 795L475 750L475 775L340 880Z", G],
  ["M340 845L400 805V838L340 878Z", D],
  ["M840 345L915 335L890 365L810 385Z", G],
  // far rail brackets
  ["M700 465L712 452L722 460L722 595L705 600L697 585Z", D],
  ["M762 415L778 405L782 530L768 535Z", D],
  ["M768 350L790 355L802 385L830 430L825 455L790 430L780 375L765 362Z", D],
  ["M980 262L1000 250L1010 268L985 300L952 298Z", D],
  // rear end
  ["M1010 108L1035 106L1068 130L1065 160L1045 180L1040 225L1020 215L1015 165L1022 150L1008 130Z", D],
  ["M1070 155L1100 138L1120 140L1118 160L1098 175L1100 230L1115 235L1110 250L1080 272L1050 262L1045 220Z", D],
  ["M1160 182L1190 160L1225 153L1288 175L1285 212L1250 200L1245 188L1210 180L1190 190Z", D],
  ["M1098 165L1248 205L1248 225L1098 182Z", G],
  ["M1098 182L1248 225L1245 275L1180 250L1098 220Z", D],
  ["M1180 250L1240 262L1238 300L1182 278Z", D],
  ["M1248 222L1262 190L1302 225L1300 290L1285 340L1255 330L1240 295Z", D],
  ["M1300 200L1322 200L1355 225L1352 300L1320 320L1295 305Z", D],
  // near rail
  ["M545 862L620 812L740 700L860 620L925 560L1020 495L1100 425L1225 332L1300 300L1300 335L1255 385L1180 435L1100 490L1020 570L925 650L860 672L722 800L612 882L560 900Z", G],
  ["M612 835L720 752L725 795L612 880Z", D],
  ["M850 655L925 600L1020 530L1020 565L925 650L870 668Z", D],
  ["M935 580L1015 520V560L935 620Z", D],
  ["M1180 380L1225 352L1228 400L1182 425Z", D],
  ["M1110 415L1170 372V398L1112 440Z", D],
  // near rail plates
  ["M1020 470L1045 465L1085 560L1075 572L1020 545Z", G],
  ["M1110 460L1152 412L1222 465L1175 512Z", G],
  ["M1228 330L1252 322L1280 392L1270 402L1228 395Z", G],
  ["M1182 298L1200 288L1222 300L1220 325L1190 312Z", D],
  ["M905 545L925 538L925 602L905 590Z", D],
  ["M955 502L968 500L970 545L955 552Z", D],
  ["M870 670L915 630L938 652L925 668L880 678Z", D],
  // middle cross beam
  ["M430 512L455 498L490 530L488 570L462 580L465 630L430 640L438 570Z", D],
  ["M455 575L560 600L740 655L865 702L862 750L700 700L560 655L505 645L455 625Z", G],
  ["M462 615L508 630L505 650L460 638Z", D],
  ["M555 645L620 662V685L555 672Z", D],
  ["M520 615L545 585L560 590L550 720L528 725L508 675Z", D],
  ["M705 738L735 655L762 665L728 795Z", D],
  ["M820 640L840 640L845 700L820 750L805 770Z", D],
  ["M850 672L900 688L898 710L870 715Z", D],
  ["M848 752L878 782L892 764L948 778L948 792L930 806L885 806L880 794L845 762Z", D],
  ["M600 762L620 745L665 765L665 800L602 797Z", D],
  ["M448 645L462 642L485 700L470 706L455 680Z", D],
  // front end
  ["M250 812L285 798L360 790L380 800L300 860L250 825Z", G],
  ["M262 870L310 850L335 885L320 912L265 895Z", D],
  ["M180 872L265 895L440 945L520 965L520 1030L440 1002L265 945L180 930Z", G],
  ["M385 925L500 912L520 925L500 935L440 948Z", D],
  ["M440 1000L500 1015L500 1045Z", D],
  ["M178 785L190 768L205 780L200 880L190 1010L165 1005Z", D],
  ["M205 795L225 778L240 800L240 835L215 825L205 870L210 960L235 950L220 1010L200 1018L190 1008Z", D],
  ["M575 880L632 910L665 945L622 1005L575 985Z", G],
  ["M510 890L528 875L538 885L520 1110L500 1115L495 1100L498 970Z", D],
  ["M545 865L575 875L575 1040L545 1110L530 1124L522 1110L528 905Z", D],
  ["M545 865L600 825L618 840L615 900L590 885Z", D],
];

const blacks =
  "M265 862L520 690M300 880L475 755M545 722L640 640M640 630L900 425M700 545L760 490M830 440L1060 250M850 470L1040 310" +
  "M560 890L740 745M740 715L860 630M880 640L1020 520M870 660L1020 550M1050 480L1225 345M1120 450L1290 320M560 620L740 675L865 720" +
  "M1110 195L1240 232M1110 205L1240 245M180 890L265 912M270 945V905M440 955V1000M548 590L540 720M740 665L720 790M565 610V660" +
  "M1130 460L1215 465M1045 470L1075 560M1150 420L1175 508M585 905L660 950M590 960L620 1000M190 785L180 1000M215 800L200 1005" +
  "M520 890L508 1100M548 885L535 1110M560 890V1060M935 570L930 640M980 530L985 590M770 420V530M710 465V590M1085 170L1070 265" +
  "M1270 230L1262 330M1315 215L1325 305M1325 210L1340 310M885 770L945 785M605 765L660 780M650 770V800" +
  "M1030 130L1040 215M1025 160L1050 190M1060 160L1100 175M1080 200V265M1100 235L1060 260M1170 185L1225 162L1280 182M1195 170L1270 195" +
  "M1255 240L1295 255M1250 270L1292 285M1245 300L1288 312M1305 240L1350 250M1305 270L1350 280M1190 262V280M1210 265V288M1225 268V292" +
  "M455 515L485 540M440 540L485 560M450 560V630M470 585V630M210 900L265 915M225 880V930M240 900L255 915M560 1050L580 1040M545 1070L582 1062";

const heavy =
  "M345 728L435 752M380 698L470 725M425 812L480 800M440 790L470 806M1155 350L1160 335L1180 340L1182 370M1080 400L1100 398V420M1003 462L1030 470" +
  "M910 548L945 538M955 505L965 500M740 355L775 350M850 750L885 785M820 600L850 612M685 750L690 730L705 740" +
  "M1040 245L1075 240M960 300L1000 285M850 440L880 420M860 480L895 455M345 935L360 900M650 655L665 680";

const wires =
  "M200 770C165 760 120 830 122 885L150 990L170 1000M175 790C145 820 145 870 152 900L168 960M225 775L228 740H247V810" +
  "M480 925C485 890 505 870 530 878M460 1022L488 1100L525 1118M585 1010V1080M565 1080Q560 1125 535 1124" +
  "M420 640V565L435 562M490 505V560M1340 310L1320 370L1240 435M1300 350L1250 400L1190 455M1290 360L1300 340M985 250Q1000 235 1020 240" +
  "M1155 292V360M1078 355V430M1002 418V490M925 505V560M850 580V620M683 700V760M820 620V760M405 770V850M565 812V850M474 710V790" +
  "M825 430V500M965 320V380M790 610V650M880 720Q905 725 912 705L890 712M440 835L490 790M1020 345L1080 285";

const posts = "M1155 292V335M1078 355V400M1002 418V465M925 505V540M850 580V612M683 700V740M565 812V840M474 740V785M403 790V845M825 450V498M965 330V380M820 680V760M548 650V722";

const specks: [number, number][] = [];
for (let i = 0; i < 50; i++) {
  const j = (i * 37) % 23;
  specks.push([325 + i * 15 + (j % 9), 842 - i * 12 + j]);
  specks.push([600 + i * 13.5 + (j % 11), 838 - i * 10.6 + j]);
}
for (let i = 0; i < 26; i++) {
  const j = (i * 29) % 31;
  specks.push([835 + i * 9, 445 - i * 7.5 + j]);
  specks.push([1050 + ((i * 41) % 60), 160 + ((i * 53) % 100)]);
  specks.push([1248 + ((i * 31) % 95), 215 + ((i * 47) % 90)]);
  specks.push([535 + ((i * 17) % 40), 880 + i * 8]);
}

const burst = Array.from({ length: 60 }, (_, i) => {
  const a = i * 2.4;
  const r = 12 + ((i * 29) % 50);
  return `M${775 + Math.cos(a) * r} ${603 + Math.sin(a) * r * 0.7}l${Math.cos(a + i) * 12} ${Math.sin(a + i) * 12}`;
}).join("");

const holes = [
  [1025, 120], [1040, 124], [1010, 212], [1035, 218], [1335, 222], [1310, 300], [210, 992], [178, 985],
  [548, 900], [546, 952], [510, 1090], [533, 1090], [745, 755], [765, 740], [435, 520], [790, 420],
];

const Chassis = () => (
  <svg viewBox="0 0 1758 1968" role="img" aria-label="Modelo 3D del chasis">
    <g transform="translate(57 459)" strokeLinejoin="round">
      <path d={wires} fill="none" stroke="#0b980b" strokeWidth="3" />
      {solids.map(([d, fill], i) => (
        <path key={i} d={d} fill={fill} stroke="#000" strokeWidth="5" />
      ))}
      <path d="M215 822L268 892L208 876ZM452 952L500 932V966ZM1062 490L1085 486L1080 498Z" fill="#7bff6a" />
      <path d={blacks} fill="none" stroke="#000" strokeWidth="3" />
      <path d="M565 607L740 660M765 672L862 708M1100 172L1245 212M268 900L438 948M520 640L530 612M745 720L762 680" fill="none" stroke="#9dfb8c" strokeWidth="2" />
      <path d={posts} fill="none" stroke="#0b980b" strokeWidth="7" />
      <path d={posts} fill="none" stroke="#033f03" strokeWidth="2" strokeDasharray="3 5" />
      <path d={heavy} fill="none" stroke="#001a00" strokeWidth="8" />
      {specks.map(([x, y], i) => (
        <path key={i} d={`M${x} ${y}l${i % 3 ? 9 : 3} ${i % 2 ? 5 : -6}v${i % 4 ? 5 : 10}`} fill="none" stroke="#000" strokeWidth="3" />
      ))}
      {holes.map(([x, y]) => (
        <circle key={`${x}-${y}`} cx={x} cy={y} r="7" fill="#001500" />
      ))}
      <ellipse cx="645" cy="668" rx="13" ry="14" fill="#0b980b" stroke="#000" strokeWidth="5" />
      <path d="M690 668L710 672V690L690 686ZM537 985L548 982V1030L537 1032Z" fill="#067306" stroke="#000" strokeWidth="4" />
      <path d={burst} fill="none" stroke="#a5622d" strokeWidth="4" />
      <path d="M752 515V545M745 560L752 600" stroke="#a5622d" strokeWidth="6" />
      <path d="M740 605L785 600M760 590L790 580M765 640L780 612M780 570L800 585L845 612" fill="none" stroke="#000" strokeWidth="4" />
      <path d="M684 250L678 275M694 252V272M1018 355V378M1033 360V374" stroke="#111" strokeWidth="4" />
      <path d="M1630 860h6M1632 870h4" stroke="#8aa" strokeWidth="3" />
      <path d="M770 1377L756 1384L792 1400M728 1398L740 1399L732 1408M754 1428V1418L762 1416M766 1410L778 1418V1428" fill="none" stroke="#a5622d" strokeWidth="3" />
    </g>
    <g>
      <path d="M120 1840Q122 1878 165 1878Q205 1874 212 1830L160 1800Z" fill="#a3c4c4" />
      <path d="M155 1809L122 1838" stroke="#00a000" strokeWidth="13" />
      <path d="M100 1832L130 1830L134 1848L112 1858Z" fill="#0f0" />
      <path d="M153 1811L206 1832" stroke="#f00" strokeWidth="12" />
      <path d="M212 1814L228 1846L198 1850Z" fill="#d80000" />
      <path d="M150 1822V1874" stroke="#1a14e0" strokeWidth="10" />
      <path d="M136 1872H162L148 1890Z" fill="#00c" />
      <text x="230" y="1845" fill="#f00" fontSize="46" fontFamily="Liberation Sans, sans-serif">X</text>
      <text x="86" y="1856" fill="#0f0" fontSize="44" fontFamily="Liberation Sans, sans-serif">Y</text>
      <text x="135" y="1913" fill="#00f" fontSize="30" fontFamily="Liberation Sans, sans-serif">Z</text>
    </g>
  </svg>
);

/* ---------- page ---------- */

type Tool = [string, string?, string?];
const toolGroups: [number, Tool[]][] = [
  [114, [["tools", "Herramientas", "#f4f5f8"]]],
  [63, [["home", "Inicio"]]],
  [58, [["collapse"], ["expand"]]],
  [30, [["refresh"]]],
  [81, [["page", "Nuevo", "#f4f5f8"]]],
  [171, [["copy"], ["apply", "Aplicar"], ["save", "Guardar"]]],
  [92, [["clip", "Adjuntar", "#f4f5f8"]]],
  [89, [["trash", "Eliminar", "#f4f5f8"]]],
  [80, [["spectrum", "Espectro"]]],
  [94, [["windows", "Ventanas", "#f4f5f8"]]],
  [79, [["close", "Cerrar", "#8d93a8"]]],
];

export default function App() {
  return (
    <>
      <Global />
      <Shell>
        <DocTabs>
          <DocTab>
            30340
            <CloseTab aria-label="Cerrar pestaña">
              <svg width="11" height="11" viewBox="0 0 11 11" aria-hidden="true">
                <circle cx="5.500" cy="5.500" r="5" fill="#c9cede" />
                <path d="M3.500 3.500L7.500 7.500M7.500 3.500L3.500 7.500" stroke="#3a4163" strokeWidth="1.600" />
              </svg>
            </CloseTab>
          </DocTab>
          <Caret color="#b8bdcc" />
        </DocTabs>
        <Frame>
          <Toolbar>
            <Grip />
            {toolGroups.map(([w, items], i) => (
              <ToolGroup key={i} $w={w}>
                {items.map(([icon, label, caret]) => (
                  <ToolButton key={icon} aria-label={label ?? icon}>
                    <Icon name={icon} />
                    {label}
                    {caret && <Caret color={caret} />}
                  </ToolButton>
                ))}
              </ToolGroup>
            ))}
          </Toolbar>
          <Body>
            <Left>
              <Notice>
                <NoticeIcon>
                  <Icon name="warn" size={28} />
                </NoticeIcon>
                <NoticeText>
                  <Title>30340/000, SIN APROBAR</Title>
                  <Subtitle>Requiere atención para resolver estado</Subtitle>
                </NoticeText>
              </Notice>
              <ItemTree />
              <Actions>
                <ButtonRun $gap={2}>
                  <ButtonRun>
                    <IconButton $w={26} $h={26} aria-label="Editar BOM"><Icon name="bracket" size={20} /></IconButton>
                    <IconButton $w={26} $h={26} aria-label="Abrir"><Icon name="open" /></IconButton>
                    <IconButton $w={26} $h={26} aria-label="Opciones"><Icon name="gear" /></IconButton>
                    <Split>
                      <IconButton $w={23} $h={26} aria-label="Sumar"><Icon name="sigma" size={14} /></IconButton>
                      <IconButton $w={17} $h={26} aria-label="Más sumas"><Caret /></IconButton>
                    </Split>
                    <Split>
                      <IconButton $w={23} $h={26} aria-label="Niveles"><Icon name="treeWhite" size={14} /></IconButton>
                      <IconButton $w={17} $h={26} aria-label="Más niveles"><Caret /></IconButton>
                    </Split>
                    <IconButton $w={26} $h={26} aria-label="Estructura"><Icon name="tree" /></IconButton>
                  </ButtonRun>
                  <IconButton $w={26} $h={26} aria-label="Acoplar"><Icon name="dock" /></IconButton>
                  <IconButton $w={26} $h={26} aria-label="Exportar"><Icon name="export" /></IconButton>
                  <IconButton $w={26} $h={26} aria-label="Imprimir"><Icon name="print" /></IconButton>
                  <IconButton $w={26} $h={26} aria-label="Móvil"><Icon name="phone" /></IconButton>
                </ButtonRun>
                <span>174 Items en 00:20.429</span>
              </Actions>
              <BomTab>
                <Icon name="sigma" size={12} />
                M-Bom [Ult. Aprobada]
              </BomTab>
              <BomPanel>
                <BomTitle>M-BOM (Estructura Manufactura)</BomTitle>
                <Search onSubmit={(e) => e.preventDefault()}>
                  <SearchInput aria-label="Buscar" placeholder="Enter text to search..." />
                  <FindButton>Find</FindButton>
                </Search>
                <BomGrid />
              </BomPanel>
            </Left>
            <Right>
              <Form onSubmit={(e) => e.preventDefault()}>
                <Row $after={2}>
                  <Label htmlFor="codigo">Código :</Label>
                  <Input id="codigo" defaultValue="30340" />
                  <IconButton type="button" aria-label="Guardar pieza"><Icon name="boxSave" /></IconButton>
                  <IconButton type="button" aria-label="Actividad"><Icon name="pulse" /></IconButton>
                  <IconButton type="button" aria-label="Código QR"><Icon name="qr" /></IconButton>
                  <Label htmlFor="interno" $w={41}>Int. :</Label>
                  <Input id="interno" defaultValue="34646" $w={76} />
                  <PairButton type="button" $w={42} aria-label="Anterior"><Icon name="eyeOff" /><Icon name="prev" /></PairButton>
                  <IconButton type="button" aria-label="Pieza"><Icon name="box" /></IconButton>
                  <IconButton type="button" aria-label="Siguiente"><Icon name="next" /></IconButton>
                </Row>
                <Row>
                  <Label htmlFor="descripcion">Descripción :</Label>
                  <Input id="descripcion" defaultValue="CHASIS AUTOPROPULSADA ALLIGATOR CUMMINS" />
                </Row>
                <Row>
                  <Label htmlFor="modelo">Modelo :</Label>
                  <Input id="modelo" defaultValue="S/Reg" />
                  <IconButton type="button" aria-label="Configurar modelo"><Icon name="gridGear" /></IconButton>
                </Row>
                <Row>
                  <Label htmlFor="origen">Origen :</Label>
                  <Select id="origen" value="Montado" />
                </Row>
                <Row>
                  <Label htmlFor="origenSup">Origen superior :</Label>
                  <Select id="origenSup" value="Montado" />
                  <IconButton type="button" aria-label="Lista de orígenes"><Icon name="list" /></IconButton>
                </Row>
                <Row>
                  <Label htmlFor="tipo">Tipo de Item :</Label>
                  <Select id="tipo" value="INGENIERIA" />
                </Row>
                <Row>
                  <Label htmlFor="unidad">Unidad :</Label>
                  <Select id="unidad" value="Unidad" />
                  <IconButton type="button" aria-label="Lista de unidades"><Icon name="list" /></IconButton>
                  <IconButton type="button" aria-label="Convertir"><Icon name="convert" /></IconButton>
                  <Label htmlFor="estadio" $w={61}>Estadío :</Label>
                  <Select id="estadio" value="" w={178} />
                </Row>
                <Commands>
                  <ButtonRun>
                    <Command type="button" $w={99}><Icon name="gear" size={14} /><span>Operaciones</span></Command>
                    <IconButton type="button" aria-label="Descargar"><Icon name="download" /></IconButton>
                    <Command type="button" $w={77}><Icon name="meta" /><span>Metadatos</span></Command>
                  </ButtonRun>
                  <ButtonRun $gap={2}>
                    <IconButton type="button" aria-label="Promedio"><Icon name="mean" /></IconButton>
                    <Command type="button" $w={81}><Icon name="money" /><span>Costo</span></Command>
                    <Command type="button" $w={83}><Icon name="bracket" size={18} /><span>Editar</span></Command>
                    <Command type="button" $w={82}><Icon name="maximize" /><span>Maximizar</span></Command>
                  </ButtonRun>
                </Commands>
              </Form>
              <Tabs role="tablist">
                <Tab role="tab">Componente</Tab>
                <Tab role="tab">Historia</Tab>
                <Tab role="tab">Metadatos</Tab>
                <Tab role="tab" $on aria-selected="true">Visor</Tab>
                <Tab role="tab">Visor componente</Tab>
              </Tabs>
              <Viewer>
                <ViewerBar>
                  <ButtonRun>
                    {viewTools.map((t) => (
                      <IconButton key={t} $w={26} $h={26} aria-label={t}>
                        <Icon name={t} size={largeTools.includes(t) ? 20 : 16} />
                      </IconButton>
                    ))}
                  </ButtonRun>
                  <IconButton $w={26} $h={26} aria-label="Ajustes"><Icon name="gear" /></IconButton>
                </ViewerBar>
                <Canvas>
                  <Chassis />
                </Canvas>
              </Viewer>
            </Right>
          </Body>
        </Frame>
      </Shell>
    </>
  );
}
